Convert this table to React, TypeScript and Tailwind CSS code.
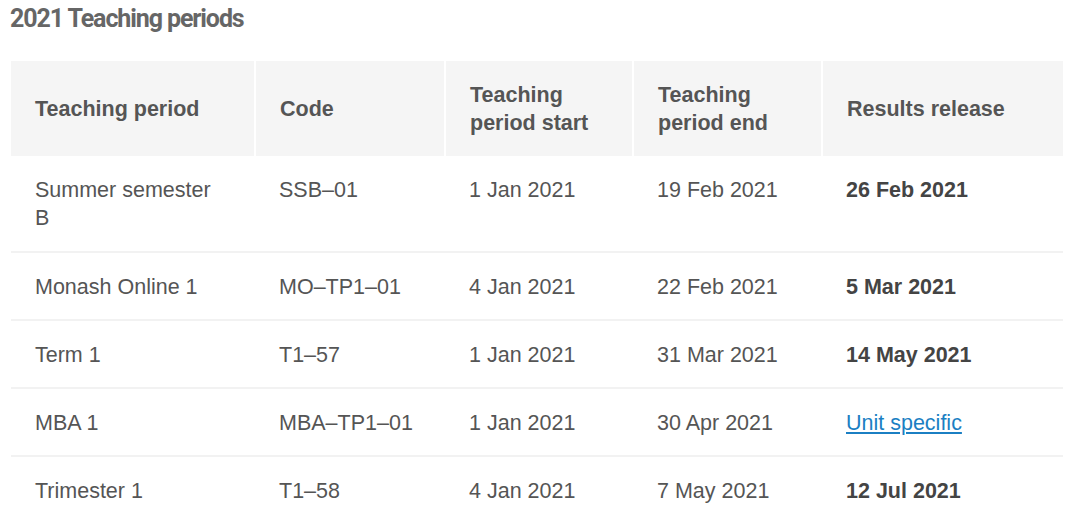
const rows = [
  { name: "Summer semester B", code: "SSB–01", start: "1 Jan 2021", end: "19 Feb 2021", result: "26 Feb 2021" },
  { name: "Monash Online 1", code: "MO–TP1–01", start: "4 Jan 2021", end: "22 Feb 2021", result: "5 Mar 2021" },
  { name: "Term 1", code: "T1–57", start: "1 Jan 2021", end: "31 Mar 2021", result: "14 May 2021" },
  { name: "MBA 1", code: "MBA–TP1–01", start: "1 Jan 2021", end: "30 Apr 2021", result: "Unit specific", link: true },
  { name: "Trimester 1", code: "T1–58", start: "4 Jan 2021", end: "7 May 2021", result: "12 Jul 2021" },
];

export default function App() {
  return (
    <div className="min-h-screen w-[1080px] h-[518px] overflow-hidden bg-white">
      <h2 className="pl-[10px] pt-[4px] text-[25px] leading-[30px] font-bold tracking-[-1.1px] text-[#666] font-['Roboto',sans-serif]">
        2021 Teaching periods
      </h2>
      <table className="ml-[11px] mt-[27px] w-[1052px] table-fixed border-collapse font-['Liberation_Sans',Arial,sans-serif] text-[21.5px] leading-[28px] text-[#555]">
        <colgroup>
          <col className="w-[244px]" />
          <col className="w-[190px]" />
          <col className="w-[188px]" />
          <col className="w-[189px]" />
          <col className="w-[241px]" />
        </colgroup>
        <thead>
          <tr className="h-[95px] bg-[#f5f5f5] text-left">
            <th className="px-[24px] align-middle font-bold border-r-2 border-white">Teaching period</th>
            <th className="px-[24px] align-middle font-bold border-r-2 border-white">Code</th>
            <th className="px-[24px] align-middle font-bold border-r-2 border-white">Teaching period start</th>
            <th className="px-[24px] align-middle font-bold border-r-2 border-white">Teaching period end</th>
            <th className="px-[24px] align-middle font-bold">Results release</th>
          </tr>
        </thead>
        <tbody>
          {rows.map((r, i) => (
            <tr key={r.code} className={i === 0 ? "h-[96px] border-b-2 border-[#f2f2f2]" : "border-b-2 border-[#f2f2f2]"}>
              <td className="pl-[24px] pr-[30px] pt-[20px] pb-[18px] align-top">{r.name}</td>
              <td className="px-[24px] pt-[20px] pb-[18px] align-top whitespace-nowrap">{r.code}</td>
              <td className="px-[24px] pt-[20px] pb-[18px] align-top">{r.start}</td>
              <td className="px-[24px] pt-[20px] pb-[18px] align-top">{r.end}</td>
              <td className="px-[24px] pt-[20px] pb-[18px] align-top">
                {r.link ? (
                  <a href="#" className="text-[#1b7fc3] underline underline-offset-2">
                    {r.result}
                  </a>
                ) : (
                  <span className="font-bold text-[#444]">{r.result}</span>
                )}
              </td>
            </tr>
          ))}
        </tbody>
      </table>
    </div>
  );
}
